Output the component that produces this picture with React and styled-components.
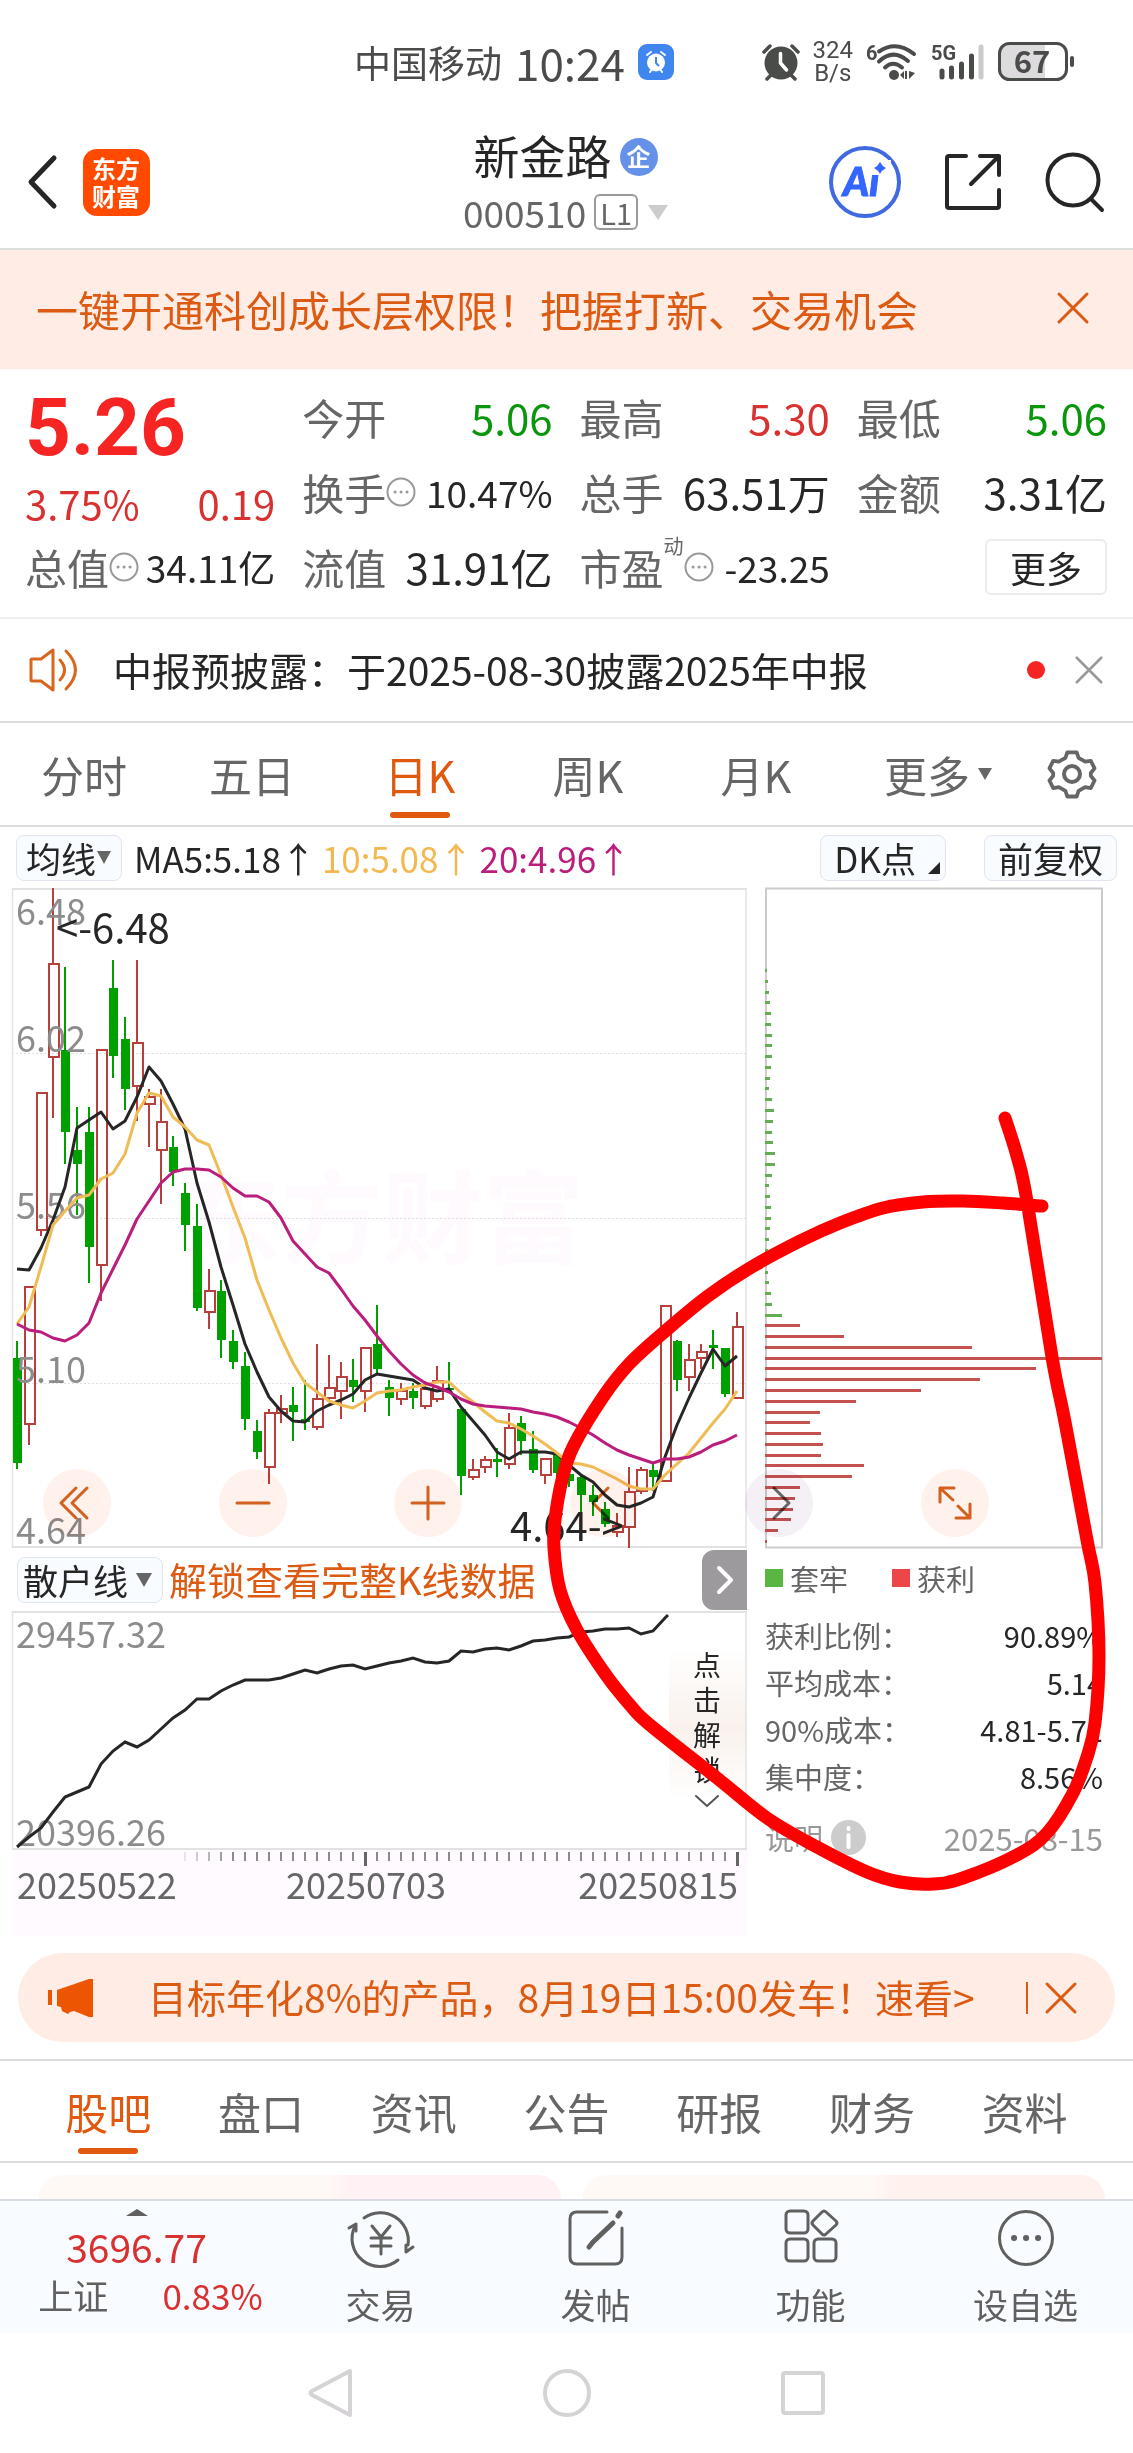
import React, { useState } from "react";
import styled, { createGlobalStyle } from "styled-components";

const FONT = `"Noto Sans CJK SC", "Noto Sans", sans-serif`;
const STEP = 12;

// [up?, high, top, bottom, low] in chart units, one entry per trading day
const candles = [
  [0, 453, 470, 575, 581],
  [1, 398, 398, 536, 557],
  [1, 204, 204, 342, 348],
  [1, 0, 75, 169, 230],
  [0, 79, 162, 244, 276],
  [0, 219, 262, 276, 327],
  [0, 219, 244, 359, 395],
  [1, 161, 161, 377, 413],
  [0, 72, 100, 168, 190],
  [0, 129, 151, 201, 222],
  [1, 72, 154, 198, 233],
  [1, 201, 208, 216, 259],
  [1, 201, 233, 262, 316],
  [0, 248, 259, 284, 298],
  [0, 295, 305, 337, 363],
  [0, 316, 338, 420, 423],
  [1, 381, 402, 424, 441],
  [0, 392, 403, 452, 470],
  [0, 442, 453, 474, 481],
  [0, 464, 478, 531, 542],
  [0, 532, 543, 564, 571],
  [1, 521, 524, 579, 596],
  [1, 507, 520, 525, 535],
  [0, 499, 517, 524, 553],
  [0, 492, 531, 534, 542],
  [1, 456, 510, 539, 542],
  [1, 467, 499, 510, 513],
  [1, 474, 488, 503, 531],
  [0, 471, 492, 499, 514],
  [1, 459, 459, 503, 524],
  [0, 417, 456, 481, 486],
  [0, 492, 499, 510, 528],
  [1, 495, 502, 511, 517],
  [0, 495, 503, 510, 521],
  [1, 493, 500, 518, 521],
  [1, 478, 492, 511, 514],
  [0, 474, 500, 502, 505],
  [0, 521, 521, 588, 607],
  [1, 571, 581, 589, 592],
  [1, 568, 571, 579, 585],
  [0, 560, 571, 574, 589],
  [1, 525, 539, 576, 581],
  [0, 528, 535, 553, 567],
  [0, 543, 561, 582, 585],
  [1, 570, 570, 587, 596],
  [0, 565, 567, 585, 589],
  [0, 579, 586, 593, 599],
  [0, 587, 589, 607, 628],
  [0, 597, 607, 614, 628],
  [0, 614, 621, 636, 639],
  [1, 625, 637, 644, 649],
  [1, 579, 603, 639, 660],
  [1, 579, 581, 603, 606],
  [0, 575, 582, 589, 603],
  [1, 417, 417, 593, 593],
  [0, 452, 453, 492, 503],
  [1, 456, 471, 489, 503],
  [1, 456, 463, 470, 481],
  [0, 442, 457, 460, 481],
  [0, 460, 460, 506, 509],
  [1, 424, 438, 510, 510],
];

const ma5 = [
  381, 382, 360, 332, 299, 240, 232, 224, 241, 233, 209, 179, 193, 216, 241,
  295, 334, 379, 417, 456, 484, 509, 523, 533, 534, 523, 517, 512, 506, 492,
  486, 488, 490, 492, 500, 503, 501, 519, 533, 547, 564, 571, 564, 564, 564,
  566, 577, 587, 594, 607, 617, 619, 615, 609, 569, 537, 510, 485, 461, 478,
  468,
];

const ma10 = [
  436, 419, 379, 337, 323, 310, 307, 291, 285, 266, 225, 205, 208, 229, 239,
  252, 257, 287, 319, 350, 392, 422, 450, 475, 495, 504, 513, 517, 520, 513,
  505, 503, 502, 499, 497, 494, 494, 505, 514, 524, 533, 535, 541, 548, 556,
  565, 575, 576, 579, 585, 591, 598, 601, 601, 587, 576, 565, 550, 535, 521,
  503,
];

const ma20 = [
  436, 442, 444, 450, 453, 447, 435, 405, 381, 357, 331, 313, 295, 284, 281,
  281, 282, 289, 300, 308, 308, 314, 330, 353, 366, 379, 385, 401, 418, 432,
  448, 463, 476, 487, 495, 499, 504, 511, 516, 518, 519, 520, 521, 524, 526,
  529, 534, 540, 547, 555, 562, 567, 571, 575, 571, 571, 569, 564, 557, 553,
  547,
];

const retail = [
  236, 226, 217, 201, 186, 181, 176, 153, 140, 131, 136, 129, 118, 107, 99,
  88, 88, 80, 74, 69, 69, 69, 67, 63, 59, 62, 58, 55, 54, 58, 55, 52, 50, 47,
  51, 52, 50, 40, 41, 38, 37, 39, 35, 30, 29, 27, 26, 21, 20, 18, 18, 17, 23,
  20, 7,
];

const trapped = [
  2, 3, 4, 5, 6, 6, 7, 7, 7, 6, 5, 4, 7, 9, 8, 7, 8, 10, 10, 7, 4, 5, 6, 6, 5,
  4, 3, 3, 3, 4, 6, 7, 17,
];
const profit = [
  35, 79, 207, 337, 271, 215, 156, 91, 55, 45, 56, 58, 56, 99, 87, 35, 30, 28,
  26, 13, 2,
];

const strokePoints = [
  [1005, 230], [1017, 268], [1027, 313], [1052, 469], [1065, 534], [1087, 652],
  [1095, 695], [1099, 768], [1095, 835], [1087, 869], [1073, 905], [1047, 945],
  [1017, 967], [963, 990], [933, 996], [900, 994], [867, 984], [817, 959],
  [767, 930], [717, 890], [650, 837], [630, 817], [606, 787], [577, 742],
  [560, 702], [554, 660], [555, 632], [562, 592], [573, 559], [603, 509],
  [630, 475], [670, 439], [708, 408], [750, 380], [800, 353], [840, 335],
  [883, 320], [923, 314], [963, 313], [1003, 315], [1042, 318],
];

const chartTabs = ["分时", "五日", "日K", "周K", "月K"];
const infoTabs = ["股吧", "盘口", "资讯", "公告", "研报", "财务", "资料"];

const toLine = (ys) => ys.map((y, i) => `${5 + i * STEP},${y}`).join(" ");

// Catmull-Rom to bezier
const toCurve = (pts) => {
  let d = `M${pts[0][0]} ${pts[0][1]}`;
  for (let i = 0; i < pts.length - 1; i++) {
    const p0 = pts[i - 1] || pts[i];
    const p1 = pts[i];
    const p2 = pts[i + 1];
    const p3 = pts[i + 2] || p2;
    d += ` C${p1[0] + (p2[0] - p0[0]) / 6} ${p1[1] + (p2[1] - p0[1]) / 6}`;
    d += ` ${p2[0] - (p3[0] - p1[0]) / 6} ${p2[1] - (p3[1] - p1[1]) / 6}`;
    d += ` ${p2[0]} ${p2[1]}`;
  }
  return d;
};

function CloseIcon({ size = 32, width = 3 }) {
  return (
    <Icon width={size} height={size} viewBox="0 0 32 32" $width={width}>
      <path d="M2 2 30 30M30 2 2 30" />
    </Icon>
  );
}

function DotsIcon() {
  return (
    <Icon width="30" height="30" viewBox="0 0 30 30" $width={2}>
      <circle cx="15" cy="15" r="13.5" />
      <path d="M9 15h.1M15 15h.1M21 15h.1" strokeWidth="3" />
    </Icon>
  );
}

function Caret({ w = 14, h = 13, up }) {
  return (
    <svg width={w} height={h} viewBox="0 0 14 13" preserveAspectRatio="none" aria-hidden="true">
      <path d={up ? "M0 13 7 0l7 13z" : "M0 0h14L7 13z"} fill="currentColor" />
    </svg>
  );
}

function StatusBar() {
  return (
    <StatusRow>
      <StatusGroup>
        <Carrier>中国移动</Carrier>
        <Clock>10:24</Clock>
        <svg width="36" height="36" viewBox="0 0 36 36">
          <rect width="36" height="36" rx="9" fill="#3f87ef" />
          <circle cx="18" cy="18.500" r="9" fill="#fff" />
          <path d="M9 11l4-3M27 11l-4-3M12 28l2-3M24 28l-2-3" stroke="#fff" strokeWidth="2" strokeLinecap="round" />
          <path d="M18 13v6l3 3" stroke="#3f87ef" strokeWidth="2" fill="none" />
        </svg>
      </StatusGroup>
      <StatusGroup>
        <svg width="38" height="38" viewBox="0 0 38 38">
          <circle cx="19" cy="20" r="16.500" fill="#4a4c49" />
          <path d="M2 9l6-6M36 9l-6-6M5 36l5-5M33 36l-5-5" stroke="#4a4c49" strokeWidth="3.500" strokeLinecap="round" />
          <path d="M18.500 10.500v9.500l6 7" stroke="#fff" strokeWidth="3.500" fill="none" strokeLinecap="round" />
        </svg>
        <Speed>
          324
          <br />
          B/s
        </Speed>
        <svg width="52" height="40" viewBox="0 0 52 40">
          <SmallMark x="0" y="18">6</SmallMark>
          <g fill="none" stroke="#4a4c49" strokeWidth="4" strokeLinecap="round">
            <path d="M13 9.500Q30-2 48 12" />
            <path d="M13 19.500Q27 6 42 19" />
            <path d="M19 25.500Q27 18 36 25.500" />
          </g>
          <circle cx="28" cy="33" r="5" fill="#4a4c49" />
          <path d="M34 33l4-4v8zM39 29h2v8h-2zM43 29l6 2-6 6z" fill="#4a4c49" />
        </svg>
        <svg width="54" height="40" viewBox="0 0 54 40">
          <SmallMark x="0" y="18">5G</SmallMark>
          <g stroke="#4a4c49" strokeWidth="5" strokeLinecap="round">
            <path d="M11 29v6M20.500 26v9M30.500 22v13M40.500 14v21" />
            <path d="M50 5v30" stroke="#cbc9cb" />
          </g>
        </svg>
        <svg width="77" height="40" viewBox="0 0 77 40">
          <rect x="1.500" y="1.500" width="67" height="36" rx="10" fill="#fff" />
          <path d="M47 2H11Q2 3 2 11v17q1 9 9 9h36z" fill="#dedbdf" />
          <rect x="1.500" y="1.500" width="67" height="36" rx="10" fill="none" stroke="#4a4c49" strokeWidth="3" />
          <rect x="72" y="14" width="4" height="11" rx="2" fill="#4a4c49" />
          <text x="34" y="31" textAnchor="middle" fontWeight="700" fontSize="31" fill="#4a4c49">67</text>
        </svg>
      </StatusGroup>
    </StatusRow>
  );
}

function Header() {
  return (
    <HeaderBar>
      <HeaderSide>
        <PlainButton aria-label="返回">
          <Icon width="32" height="56" viewBox="0 0 32 56" $width={5}>
            <path d="M28 4 5 28l23 24" />
          </Icon>
        </PlainButton>
        <Logo>
          东方
          <br />
          财富
        </Logo>
      </HeaderSide>
      <TitleBlock>
        <Title>
          新金路<Badge>企</Badge>
        </Title>
        <CodeButton>
          000510<Level>L1</Level>
          <Caret w={20} h={15} />
        </CodeButton>
      </TitleBlock>
      <HeaderSide $end>
        <PlainButton aria-label="智能助手">
          <svg width="72" height="72" viewBox="0 0 72 72">
            <circle cx="36" cy="36" r="34" fill="#fff" stroke="#4169e1" strokeWidth="4" />
            <AiMark x="14" y="50">Ai</AiMark>
            <rect x="42" y="14" width="20" height="15" fill="#fff" />
            <path d="M51 16q2 4 6 6-4 2-6 6-2-4-6-6 4-2 6-6z" fill="#3366ff" />
          </svg>
        </PlainButton>
        <PlainButton aria-label="分享">
          <Icon width="58" height="58" viewBox="0 0 58 58" $width={4}>
            <path d="M22 3H5Q3 3 3 5v48q0 2 2 2h48q2 0 2-2V37" />
            <path d="M36 3h19v19M55 3 27 31" />
          </Icon>
        </PlainButton>
        <PlainButton aria-label="搜索">
          <Icon width="60" height="60" viewBox="0 0 60 60" $width={4}>
            <circle cx="28" cy="28" r="25.500" />
            <path d="M46 47l11 11" />
          </Icon>
        </PlainButton>
      </HeaderSide>
    </HeaderBar>
  );
}

function QuoteItem({ label, value, color, dots, sup, small }) {
  return (
    <Quote>
      <QuoteLabel>
        {label}
        {sup && <sup>{sup}</sup>}
        {dots && <DotsIcon />}
      </QuoteLabel>
      <QuoteValue $color={color} $small={small}>
        {value}
      </QuoteValue>
    </Quote>
  );
}

function KLineChart() {
  return (
    <Canvas viewBox="0 0 735 660" role="img" aria-label="日K线图">
      <text x="168" y="368" fontSize="101" fontWeight="700" fill="#fefafe">东方财富</text>
      <g stroke="#e0e0e0" strokeWidth="1" strokeDasharray="2 2">
        <path d="M0 165.500h735M0 330.500h735M0 495.500h735" />
      </g>
      <path d="M0 1h735M0 659h735" stroke="#e3e2e3" strokeWidth="2" />
      <path d="M.5 0v660M734 0v660" stroke="#e3e2e3" strokeWidth="1.500" />
      {candles.map(([up, high, top, bottom, low], i) => {
        const x = 5 + i * STEP;
        return up ? (
          <g key={i} stroke="#b8403c" strokeWidth="2" fill="none">
            <path d={`M${x} ${high}V${top}M${x} ${bottom}V${low}`} />
            <rect x={x - 4} y={top + 1} width="10" height={Math.max(bottom - top - 1, 2)} />
          </g>
        ) : (
          <g key={i} fill="#00a000">
            <rect x={x - 1} y={high} width="2" height={low - high} />
            <rect x={x - 4} y={top} width="9" height={bottom - top} />
          </g>
        );
      })}
      <g fontSize="36" fill="#8c8c8c">
        <text x="4" y="37">6.48</text>
        <text x="4" y="164">6.02</text>
        <text x="4" y="331">5.56</text>
        <text x="4" y="495">5.10</text>
        <text x="4" y="656">4.64</text>
      </g>
      <g fill="none" strokeWidth="3" strokeLinejoin="round">
        <polyline points={toLine(ma5)} stroke="#262626" />
        <polyline points={toLine(ma10)} stroke="#f0bc56" />
        <polyline points={toLine(ma20)} stroke="#ba1d7c" />
      </g>
      <g fontSize="40" fill="#262626">
        <text x="44" y="55">&lt;-6.48</text>
        <text x="498" y="653">4.64-&gt;</text>
      </g>
    </Canvas>
  );
}

function RetailChart() {
  return (
    <Canvas viewBox="0 0 735 239" role="img" aria-label="散户线">
      <path d="M0 1h735M0 238h735" stroke="#e3e2e3" strokeWidth="2" />
      <path d="M.5 0v239M734 0v239" stroke="#e3e2e3" strokeWidth="1.500" />
      <g fontSize="36" fill="#8c8c8c">
        <text x="4" y="37">29457.32</text>
        <text x="4" y="235">20396.26</text>
      </g>
      <polyline points={`${toLine(retail)} 656,4`} fill="none" stroke="#262626" strokeWidth="3" />
    </Canvas>
  );
}

function TimeAxis() {
  const ticks = [];
  for (let i = 14; i <= 60; i++) ticks.push(i);
  return (
    <Canvas viewBox="0 0 735 86" role="img" aria-label="日期">
      <rect width="735" height="86" fill="#fefaff" />
      {ticks.map((i) => {
        const major = i === 29 || i === 60;
        return (
          <rect
            key={i}
            x={4 + i * STEP}
            y="2"
            width={major ? 3 : 2}
            height={major ? 14 : 9}
            fill={major ? "#666" : "#8a8a8a"}
            opacity={i < 18 ? 0.2 + (i - 14) * 0.2 : 1}
          />
        );
      })}
      <g fontSize="36" fill="#666">
        <text x="5" y="49">20250522</text>
        <text x="354" y="49" textAnchor="middle">20250703</text>
        <text x="726" y="49" textAnchor="end">20250815</text>
      </g>
    </Canvas>
  );
}

function ChipChart() {
  const rows = [
    ...trapped.map((w) => ({ w, color: "#63ad56" })),
    ...profit.map((w) => ({ w, color: "#c65250" })),
  ];
  return (
    <Canvas viewBox="0 0 338 660" role="img" aria-label="筹码分布">
      <rect x="1" y=".5" width="336" height="659" fill="none" stroke="#ccc" strokeWidth="2" />
      {rows.map((r, i) => (
        <rect key={i} x="0" y={Math.round(81 + i * 10.77)} width={r.w} height="3" fill={r.color} />
      ))}
    </Canvas>
  );
}

export default function App() {
  const [activeChart, setActiveChart] = useState("日K");
  const [activeInfo, setActiveInfo] = useState("股吧");

  return (
    <>
      <GlobalStyle />
      <Page>
        <StatusBar />
        <Header />

        <Promo>
          <a href="#promo">一键开通科创成长层权限！把握打新、交易机会</a>
          <PlainButton aria-label="关闭">
            <CloseIcon />
          </PlainButton>
        </Promo>

        <QuoteGrid>
          <PriceBlock>
            <Price>5.26</Price>
            <Change>
              <span>3.75%</span>
              <span>0.19</span>
            </Change>
          </PriceBlock>
          <QuoteItem label="今开" value="5.06" color="#0a960a" />
          <QuoteItem label="最高" value="5.30" color="#d93030" />
          <QuoteItem label="最低" value="5.06" color="#0a960a" />
          <QuoteItem label="换手" value="10.47%" dots small />
          <QuoteItem label="总手" value="63.51万" />
          <QuoteItem label="金额" value="3.31亿" />
          <QuoteItem label="总值" value="34.11亿" dots small />
          <QuoteItem label="流值" value="31.91亿" />
          <QuoteItem label="市盈" value="-23.25" sup="动" dots small />
          <MoreButton>更多</MoreButton>
        </QuoteGrid>

        <Notice>
          <Icon width="52" height="46" viewBox="0 0 52 46" $width={3} $color="#d9661f">
            <path d="M3 12h9L24 3v40L12 34H3q-1 0-1-1V13q0-1 1-1z" />
            <path d="M31 13q9 10 0 20M37 4q19 19 0 38" />
          </Icon>
          <NoticeText href="#notice">中报预披露：于2025-08-30披露2025年中报</NoticeText>
          <RedDot />
          <PlainButton aria-label="关闭通知">
            <Muted>
              <CloseIcon size={28} width={3} />
            </Muted>
          </PlainButton>
        </Notice>

        <ChartTabs>
          {chartTabs.map((t) => (
            <Tab key={t} $active={t === activeChart} onClick={() => setActiveChart(t)}>
              {t}
            </Tab>
          ))}
          <Tab>
            更多
            <Caret w={14} h={12} />
          </Tab>
          <PlainButton aria-label="设置">
            <Icon width="50" height="52" viewBox="0 0 50 52" $width={4} $color="#666">
              <path d="M20 3h10l2 6 7 4 6-1 4 8-4 5v3l4 5-4 8-6-1-7 4-2 6H20l-2-6-7-4-6 1-4-8 4-5v-3l-4-5 4-8 6 1 7-4z" transform="translate(1.500 1.500) scale(.94)" />
              <circle cx="25" cy="26" r="8" />
            </Icon>
          </PlainButton>
        </ChartTabs>

        <MaRow>
          <Picker>
            <select aria-label="主图指标" defaultValue="均线">
              <option>均线</option>
            </select>
            <Caret />
          </Picker>
          <MaValues>
            <Ma $color="#262626">MA5:5.18↑</Ma>
            <Ma $color="#f3b950">10:5.08↑</Ma>
            <Ma $color="#ba1d7c">20:4.96↑</Ma>
          </MaValues>
          <SmallButton>
            DK点
            <svg width="12" height="12" viewBox="0 0 12 12">
              <path d="M12 0v12H0z" fill="#262626" />
            </svg>
          </SmallButton>
          <SmallButton>前复权</SmallButton>
        </MaRow>

        <ChartSection>
          <ChartColumn>
            <KLineChart />
            <SubRow>
              <Picker $wide>
                <select aria-label="副图指标" defaultValue="散户线">
                  <option>散户线</option>
                </select>
                <Caret w={16} h={14} />
              </Picker>
              <UnlockLink href="#unlock">解锁查看完整K线数据</UnlockLink>
              <ExpandButton aria-label="展开">
                <Icon width="18" height="30" viewBox="0 0 18 30" $width={4} $color="#fff">
                  <path d="M3 3l12 12L3 27" />
                </Icon>
              </ExpandButton>
            </SubRow>
            <RetailBox>
              <RetailChart />
              <UnlockPanel>
                <span>点</span>
                <span>击</span>
                <span>解</span>
                <span>锁</span>
                <Icon width="24" height="13" viewBox="0 0 24 13" $width={2} $color="#555">
                  <path d="M1 1l11 10L23 1" />
                </Icon>
              </UnlockPanel>
            </RetailBox>
            <TimeAxis />
          </ChartColumn>

          <ChipColumn>
            <ChipChart />
            <Legend>
              <LegendItem $color="#59b741">套牢</LegendItem>
              <LegendItem $color="#ee4648">获利</LegendItem>
            </Legend>
            <ChipStats>
              <dt>获利比例：</dt>
              <dd>90.89%</dd>
              <dt>平均成本：</dt>
              <dd>5.14</dd>
              <dt>90%成本：</dt>
              <dd>4.81-5.71</dd>
              <dt>集中度：</dt>
              <dd>8.56%</dd>
            </ChipStats>
            <ChipFooter>
              <HelpButton>
                说明
                <svg width="35" height="35" viewBox="0 0 35 35">
                  <circle cx="17.500" cy="17.500" r="17.500" fill="#ccc" />
                  <path d="M17.500 8v1M17.500 15v12" stroke="#fff" strokeWidth="4" strokeLinecap="round" />
                </svg>
              </HelpButton>
              <span>2025-08-15</span>
            </ChipFooter>
          </ChipColumn>

          <Controls>
            <RoundButton aria-label="最早">
              <Icon width="32" height="32" viewBox="0 0 32 32" $width={3}>
                <path d="M15 1 0 16l15 15M26 1 11 16l15 15" />
              </Icon>
            </RoundButton>
            <RoundButton aria-label="缩小">
              <Icon width="34" height="34" viewBox="0 0 34 34" $width={3}>
                <path d="M1 17h32" />
              </Icon>
            </RoundButton>
            <RoundButton aria-label="放大">
              <Icon width="34" height="34" viewBox="0 0 34 34" $width={3}>
                <path d="M1 17h32M17 1v32" />
              </Icon>
            </RoundButton>
            <RoundButton aria-label="左移">
              <Icon width="32" height="32" viewBox="0 0 32 32" $width={3}>
                <path d="M20 1 5 16l15 15" />
              </Icon>
            </RoundButton>
            <RoundButton aria-label="右移" $muted>
              <Icon width="32" height="32" viewBox="0 0 32 32" $width={3}>
                <path d="M11 1l15 15-15 15" />
              </Icon>
            </RoundButton>
            <RoundButton aria-label="全屏">
              <Icon width="34" height="34" viewBox="0 0 34 34" $width={3}>
                <path d="M2 16V2h14M2 2l13 12M32 18v14H18M32 32 20 20" />
              </Icon>
            </RoundButton>
          </Controls>

          <Marker viewBox="0 0 1133 1048" aria-hidden="true">
            <path d={toCurve(strokePoints)} />
          </Marker>
        </ChartSection>

        <Pill>
          <svg width="48" height="40" viewBox="0 0 48 40">
            <path d="M1 12h4v15H1zM10 12 42 1h4v38h-4L27 33l-4 1-2 2-6-3-1-4-4-1z" fill="#ee5500" />
          </svg>
          <PillText href="#product">目标年化8%的产品，8月19日15:00发车！速看&gt;</PillText>
          <PillClose aria-label="关闭">
            <CloseIcon />
          </PillClose>
        </Pill>

        <InfoTabs>
          {infoTabs.map((t) => (
            <Tab key={t} $active={t === activeInfo} onClick={() => setActiveInfo(t)}>
              {t}
            </Tab>
          ))}
        </InfoTabs>

        <Cards>
          <Card $to="#fff1f4" />
          <Card $to="#fff1ee" />
        </Cards>

        <BottomBar>
          <IndexItem href="#index">
            <Caret w={22} h={7} up />
            <IndexPrice>3696.77</IndexPrice>
            <IndexRow>
              上证<b>0.83%</b>
            </IndexRow>
          </IndexItem>
          <BottomItem href="#trade">
            <Icon width="66" height="58" viewBox="0 0 66 58" $width={3}>
              <path d="M16 9A28 28 0 0 1 60 36M50 51A28 28 0 0 1 7 17" />
              <path d="M1 19l7-4v7M65 38l-7 5v-7" />
              <path d="M24 17l9 11 9-11M33 28v17M23 29h20M23 37h20" />
            </Icon>
            交易
          </BottomItem>
          <BottomItem href="#post">
            <Icon width="58" height="58" viewBox="0 0 58 58" $width={3}>
              <path d="M40 3H10Q3 3 3 10v38q0 7 7 7h38q7 0 7-7V19" />
              <path d="M51 7l2-3M46 14 26 33l-4 5" strokeWidth="5" />
            </Icon>
            发帖
          </BottomItem>
          <BottomItem href="#tools">
            <Icon width="54" height="54" viewBox="0 0 54 54" $width={3}>
              <rect x="2" y="2" width="22" height="22" rx="4" />
              <rect x="2" y="30" width="22" height="22" rx="4" />
              <rect x="30" y="30" width="22" height="22" rx="4" />
              <path d="M38 3q2-2 4 0l10 9q2 2 0 4l-10 9q-2 2-4 0l-9-9q-2-2 0-4z" />
            </Icon>
            功能
          </BottomItem>
          <BottomItem href="#watch">
            <Icon width="58" height="58" viewBox="0 0 58 58" $width={3}>
              <circle cx="29" cy="29" r="26.500" />
              <path d="M17 29h.1M29 29h.1M41 29h.1" strokeWidth="6" />
            </Icon>
            设自选
          </BottomItem>
        </BottomBar>

        <SystemNav>
          <PlainButton aria-label="系统返回">
            <Icon width="48" height="50" viewBox="0 0 48 50" $width={4} $color="#d5d3d6">
              <path d="M43 3v44L5 27q-3-2 0-4z" />
            </Icon>
          </PlainButton>
          <PlainButton aria-label="主屏幕">
            <Icon width="48" height="50" viewBox="0 0 48 50" $width={4} $color="#d5d3d6">
              <circle cx="24" cy="25" r="22" />
            </Icon>
          </PlainButton>
          <PlainButton aria-label="最近任务">
            <Icon width="48" height="50" viewBox="0 0 48 50" $width={4} $color="#d5d3d6">
              <rect x="4" y="5" width="40" height="40" rx="2" />
            </Icon>
          </PlainButton>
        </SystemNav>
      </Page>
    </>
  );
}

const GlobalStyle = createGlobalStyle`
  * {
    box-sizing: border-box;
  }

  body {
    margin: 0;
    background: #fff;
    font-family: ${FONT};
    color: #262626;
  }

  a {
    color: inherit;
    text-decoration: none;
  }

  button,
  select {
    font: inherit;
    color: inherit;
    background: none;
    border: 0;
    padding: 0;
    cursor: pointer;
  }

  svg {
    flex: none;
    display: block;
    overflow: visible;
  }
`;

const Page = styled.div`
  min-width: 0;
  overflow: hidden;
  white-space: nowrap;
`;

const Icon = styled.svg`
  fill: none;
  stroke: ${({ $color }) => $color || "currentColor"};
  stroke-width: ${({ $width }) => $width};
  stroke-linecap: round;
  stroke-linejoin: round;
`;

const PlainButton = styled.button`
  display: flex;
  align-items: center;
  justify-content: center;
`;

const StatusRow = styled.div`
  display: flex;
  align-items: center;
  justify-content: space-between;
  height: 124px;
  padding: 0 58px 0 354px;
  color: #4a4c49;
`;

const StatusGroup = styled.div`
  display: flex;
  align-items: center;
  gap: 13px;
`;

const Carrier = styled.span`
  font-size: 37px;
`;

const Clock = styled.span`
  font-size: 44px;
`;

const Speed = styled.span`
  font: 24px/23px Roboto, sans-serif;
  text-align: center;
`;

const SmallMark = styled.text`
  fill: #4a4c49;
  font: 700 20px Roboto, sans-serif;
`;

const AiMark = styled.text`
  fill: #3366ff;
  stroke: #3366ff;
  font: italic 900 40px Lato, sans-serif;
`;

const HeaderBar = styled.header`
  display: grid;
  grid-template-columns: 1fr auto 1fr;
  align-items: center;
  height: 126px;
  padding: 0 28px 8px 26px;
  border-bottom: 2px solid #dcdcdc;
`;

const HeaderSide = styled.div`
  display: flex;
  align-items: center;
  justify-content: ${({ $end }) => ($end ? "flex-end" : "flex-start")};
  gap: ${({ $end }) => ($end ? "43px" : "25px")};
`;

const Logo = styled.div`
  display: flex;
  align-items: center;
  width: 67px;
  height: 67px;
  padding: 0 9px;
  border-radius: 14px;
  background: #ff4a00;
  color: #fff;
  font-size: 24px;
  font-weight: 700;
  line-height: 28px;
`;

const TitleBlock = styled.div`
  display: flex;
  flex-direction: column;
  align-items: center;
  gap: 4px;
`;

const Title = styled.h1`
  display: flex;
  align-items: center;
  gap: 8px;
  margin: 0;
  font-size: 46px;
  font-weight: 400;
  line-height: 56px;
`;

const Badge = styled.span`
  width: 38px;
  height: 38px;
  margin-top: 6px;
  border-radius: 50%;
  background: #6691e8;
  color: #fff;
  font-size: 24px;
  font-weight: 700;
  line-height: 36px;
  text-align: center;
`;

const CodeButton = styled.button`
  display: flex;
  align-items: center;
  gap: 8px;
  color: #666;
  font-size: 37px;
  line-height: 52px;

  svg {
    margin-left: 2px;
    color: #ccc;
  }
`;

const Level = styled.span`
  padding: 0 4px;
  border: 2px solid #999;
  border-radius: 6px;
  font-size: 29px;
  line-height: 32px;
`;

const Promo = styled.div`
  display: flex;
  align-items: center;
  justify-content: space-between;
  height: 119px;
  padding: 0 44px 3px 36px;
  background: #ffede5;
  color: #dc5a12;
  font-size: 42px;
`;

const QuoteGrid = styled.section`
  display: grid;
  grid-template-columns: repeat(4, 1fr);
  grid-auto-rows: 75px;
  column-gap: 27px;
  padding: 10px 26px 13px 25px;
  border-bottom: 2px solid #efefef;
`;

const PriceBlock = styled.div`
  grid-row: span 2;
  display: flex;
  flex-direction: column;
  color: #d93030;
`;

const Price = styled.strong`
  color: #f72424;
  font-family: Roboto, sans-serif;
  font-size: 80px;
  font-weight: 700;
  line-height: 98px;
`;

const Change = styled.div`
  display: flex;
  justify-content: space-between;
  font-size: 40px;
  line-height: 52px;
`;

const Quote = styled.div`
  display: flex;
  align-items: center;
  justify-content: space-between;
`;

const QuoteLabel = styled.span`
  display: flex;
  align-items: center;
  color: #666;
  font-size: 42px;

  sup {
    align-self: flex-start;
    font-size: 20px;
    line-height: 20px;
  }

  svg {
    color: #999;
  }
`;

const QuoteValue = styled.span`
  color: ${({ $color }) => $color || "#262626"};
  font-size: ${({ $small }) => ($small ? "37px" : "42px")};
`;

const MoreButton = styled.button`
  justify-self: end;
  align-self: center;
  width: 122px;
  height: 56px;
  border: 2px solid #ececec;
  border-radius: 6px;
  font-size: 36px;
  line-height: 50px;
`;

const Notice = styled.div`
  display: flex;
  align-items: center;
  height: 104px;
  padding: 0 30px 0 29px;
  border-bottom: 2px solid #dcdcdc;
`;

const NoticeText = styled.a`
  flex: 1;
  margin: 0 0 3px 32px;
  font-size: 39px;
`;

const RedDot = styled.i`
  width: 18px;
  height: 18px;
  margin-right: 30px;
  border-radius: 50%;
  background: #f72424;
`;

const Muted = styled.span`
  color: #999;
`;

const ChartTabs = styled.nav`
  display: grid;
  grid-template-columns: repeat(5, 168fr) 196fr 71fr;
  height: 104px;
  padding-right: 26px;
  border-bottom: 2px solid #dcdcdc;
`;

const Tab = styled.button`
  position: relative;
  display: flex;
  align-items: center;
  justify-content: center;
  gap: 8px;
  color: ${({ $active }) => ($active ? "#e0590f" : "#666")};
  font-size: 43px;

  &::after {
    content: "";
    display: ${({ $active }) => ($active ? "block" : "none")};
    position: absolute;
    bottom: 7px;
    width: 60px;
    height: 6px;
    border-radius: 3px;
    background: #e0590f;
  }
`;

const MaRow = styled.div`
  display: flex;
  align-items: center;
  height: 61px;
  padding: 0 16px;
  font-size: 35px;
`;

const Picker = styled.label`
  display: flex;
  align-items: center;
  justify-content: space-between;
  width: ${({ $wide }) => ($wide ? "146px" : "106px")};
  height: 46px;
  padding: 0 10px 0 ${({ $wide }) => ($wide ? "5px" : "9px")};
  border: 1px solid #e3e5ee;
  border-radius: 8px;
  background: #f8fbff;
  font-size: 35px;

  select {
    appearance: none;
    height: 44px;
    line-height: 44px;
    outline: none;
  }

  svg {
    color: #666;
  }
`;

const MaValues = styled.div`
  display: flex;
  flex: 1;
  gap: 6px;
  margin-left: 12px;
`;

const Ma = styled.span`
  color: ${({ $color }) => $color};
`;

const SmallButton = styled.button`
  display: flex;
  align-items: center;
  height: 46px;
  padding: 0 13px;
  border: 1px solid #e3e5ee;
  border-radius: 8px;
  background: #f8fbff;
  line-height: 44px;

  & + & {
    margin-left: 38px;
  }

  svg {
    align-self: flex-end;
    margin: 0 -8px 6px 12px;
  }
`;

const ChartSection = styled.section`
  position: relative;
  display: grid;
  grid-template-columns: 735fr 338fr;
  gap: 18px;
  padding: 0 30px 0 12px;
`;

const ChartColumn = styled.div`
  min-width: 0;
`;

const ChipColumn = styled.div`
  min-width: 0;
`;

const Canvas = styled.svg`
  width: 100%;
  height: auto;
`;

const SubRow = styled.div`
  display: flex;
  align-items: center;
  height: 63px;
  padding-left: 5px;
`;

const UnlockLink = styled.a`
  flex: 1;
  margin: 0 0 3px 6px;
  color: #dc5a12;
  font-size: 38px;
`;

const ExpandButton = styled.button`
  display: flex;
  align-items: center;
  justify-content: center;
  width: 45px;
  height: 60px;
  border-radius: 12px 0 0 12px;
  background: #9c9a9c;
`;

const RetailBox = styled.div`
  position: relative;
`;

const UnlockPanel = styled.button`
  position: absolute;
  top: 36px;
  right: 2px;
  display: flex;
  flex-direction: column;
  align-items: center;
  width: 76px;
  background: linear-gradient(rgba(255, 255, 255, 0), #f9f1ec 50%, rgba(255, 255, 255, 0) 95%);
  font-size: 28px;
  line-height: 35px;

  svg {
    margin-top: 8px;
  }
`;

const Legend = styled.div`
  display: flex;
  align-items: center;
  height: 60px;
  gap: 44px;
`;

const LegendItem = styled.span`
  display: flex;
  align-items: center;
  gap: 7px;
  color: #666;
  font-size: 29px;

  &::before {
    content: "";
    width: 18px;
    height: 18px;
    background: ${({ $color }) => $color};
  }
`;

const ChipStats = styled.dl`
  display: grid;
  grid-template-columns: auto auto;
  justify-content: space-between;
  margin: 4px 0 0;
  font-size: 29px;
  line-height: 47px;

  dt {
    color: #666;
  }

  dd {
    margin: 0;
    text-align: right;
  }
`;

const ChipFooter = styled.div`
  display: flex;
  align-items: center;
  justify-content: space-between;
  height: 74px;
  color: #999;
  font-size: 31px;
`;

const HelpButton = styled.button`
  display: flex;
  align-items: center;
  gap: 8px;
  font-size: 29px;
`;

const Controls = styled.div`
  position: absolute;
  top: 581px;
  left: 43px;
  right: 144px;
  display: flex;
  justify-content: space-between;
  mix-blend-mode: multiply;
`;

const RoundButton = styled.button`
  display: flex;
  align-items: center;
  justify-content: center;
  width: 68px;
  height: 68px;
  border-radius: 50%;
  background: ${({ $muted }) => ($muted ? "#f5f0f5" : "#fff1eb")};
  color: ${({ $muted }) => ($muted ? "#666" : "#d2601f")};
`;

const Marker = styled.svg`
  position: absolute;
  top: 0;
  left: 0;
  width: 100%;
  overflow: visible;
  pointer-events: none;
  fill: none;
  stroke: #ff0000;
  stroke-width: 13;
  stroke-linecap: round;
`;

const Pill = styled.div`
  display: flex;
  align-items: center;
  height: 89px;
  margin: 17px 18px;
  padding: 0 38px 0 29px;
  border-radius: 45px;
  background: #ffede5;
  color: #dc5a12;
`;

const PillText = styled.a`
  flex: 1;
  margin: 0 0 3px 53px;
  font-size: 39px;
`;

const PillClose = styled.button`
  padding-left: 17px;
  border-left: 2px solid #dc5a12;
`;

const InfoTabs = styled.nav`
  display: grid;
  grid-template-columns: repeat(7, 1fr);
  height: 104px;
  padding: 0 32px;
  border-top: 2px solid #dcdcdc;
  border-bottom: 2px solid #dcdcdc;
`;

const Cards = styled.div`
  display: grid;
  grid-template-columns: 1fr 1fr;
  gap: 21px;
  height: 36px;
  padding: 12px 28px 0 38px;
`;

const Card = styled.div`
  border-radius: 24px 24px 0 0;
  background: linear-gradient(90deg, #fff9f5 55%, ${({ $to }) => $to} 60%);
`;

const BottomBar = styled.nav`
  display: grid;
  grid-template-columns: 273fr repeat(4, 215fr);
  height: 134px;
  border-top: 2px solid #d8dce2;
  background: #f8fbff;
  color: #5f605f;
`;

const IndexItem = styled.a`
  display: flex;
  flex-direction: column;
  align-items: center;
  padding-top: 8px;
`;

const IndexPrice = styled.span`
  margin-top: 5px;
  color: #d93030;
  font-size: 39px;
  line-height: 50px;
`;

const IndexRow = styled.span`
  display: flex;
  gap: 54px;
  margin-left: 28px;
  font-size: 35px;
  line-height: 48px;

  b {
    color: #d93030;
    font-weight: 400;
  }
`;

const BottomItem = styled.a`
  display: flex;
  flex-direction: column;
  align-items: center;
  justify-content: space-between;
  padding: 8px 0;
  font-size: 35px;
  line-height: 42px;
`;

const SystemNav = styled.div`
  display: flex;
  align-items: center;
  justify-content: center;
  gap: 188px;
  height: 120px;
`;
